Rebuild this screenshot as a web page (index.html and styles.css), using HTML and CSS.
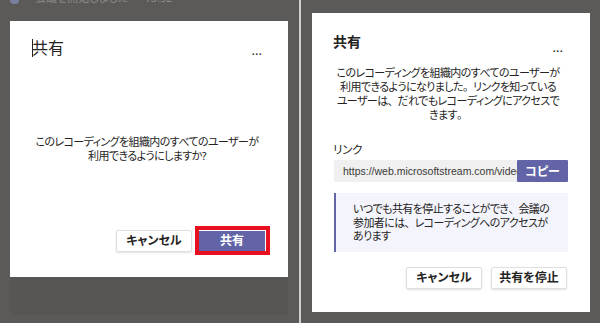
FILE: index.html
```html
<!DOCTYPE html>
<html lang="ja">
<head>
<meta charset="utf-8">
<link rel="stylesheet" href="styles.css">
</head>
<body>
<div class="pane pane-left">
  <div class="topbar">
    <span class="top-icon"></span>
    <span class="top-text">会議を開始しました</span>
    <span class="top-time">13:52</span>
  </div>
  <div class="dialog-wrap">
    <div class="card card-left">
      <div class="head">
        <span class="title title-regular"><span class="caret"></span>共有</span>
        <span class="more">...</span>
      </div>
      <p class="msg msg-left">このレコーディングを組織内のすべてのユーザーが<br>利用できるようにしますか?</p>
      <div class="actions actions-left">
        <button class="btn btn-default">キャンセル</button>
        <span class="highlight"><button class="btn btn-primary">共有</button></span>
      </div>
    </div>
  </div>
</div>
<div class="divider"></div>
<div class="pane pane-right">
  <div class="card card-right">
    <div class="head head-right">
      <span class="title title-bold">共有</span>
      <span class="more">...</span>
    </div>
    <p class="msg msg-right">このレコーディングを組織内のすべてのユーザーが<br>利用できるようになりました<span class="punct">。</span>リンクを知っている<br>ユーザーは<span class="punct">、</span>だれでもレコーディングにアクセスで<br>きます<span class="punct">。</span></p>
    <div class="link-label">リンク</div>
    <div class="link-row">
      <div class="link-input">https://web.microsoftstream.com/video/3f2a9c1e</div>
      <button class="btn-copy">コピー</button>
    </div>
    <div class="info">いつでも共有を停止することができ<span class="punct">、</span>会議の<br>参加者には<span class="punct">、</span>レコーディングへのアクセスが<br>あります</div>
    <div class="actions actions-right">
      <button class="btn btn-default">キャンセル</button>
      <button class="btn btn-default">共有を停止</button>
    </div>
  </div>
</div>
</body>
</html>
```

FILE: styles.css
```css
* { box-sizing: border-box; }
html, body { margin: 0; padding: 0; }
body {
  width: 600px;
  height: 323px;
  overflow: hidden;
  display: flex;
  background: #5b5a58;
  font-family: "Noto Sans", "Noto Sans CJK JP", sans-serif;
  font-feature-settings: "palt";
  color: #252423;
  font-size: 11px;
}
.pane { height: 323px; }
.pane-left { width: 299px; display: flex; flex-direction: column; }
.divider { width: 2px; height: 323px; background: #cfcfcf; }
.pane-right { flex: 1; padding: 13px 0 0 11px; }

.topbar {
  height: 21px;
  overflow: hidden;
  display: flex;
  align-items: flex-start;
  padding-left: 10px;
  color: #8d8b88;
  font-size: 11px;
  line-height: 12px;
}
.top-icon {
  width: 9px; height: 5px;
  margin-top: -1px;
  background: #7b7f9e;
  border-radius: 0 0 4px 4px;
}
.top-text { margin-top: -8px; margin-left: 16px; }
.top-time { margin-top: -8px; margin-left: 16px; }

.dialog-wrap {
  margin-left: 10px;
  width: 278px;
  background: #575654;
  padding-bottom: 38px;
}
.card { background: #fff; display: flex; flex-direction: column; }
.card-left { height: 256px; padding: 17px 26px 0 22px; }
.card-right { width: 278px; height: 299px; padding: 20px 27px 0 21px; }

.head { display: flex; justify-content: space-between; align-items: flex-start; height: 20px; }
.title { position: relative; }
.title-regular { font-size: 16px; line-height: 20px; }
.title-bold { font-size: 14px; line-height: 18px; font-weight: 700; }
.caret {
  position: absolute; left: 0; top: 1px;
  width: 1px; height: 18px; background: #252423;
}
.more { font-size: 13px; line-height: 20px; padding-top: 2px; }
.head-right .more { padding-top: 4px; }

.msg { margin: 0; text-align: center; white-space: nowrap; letter-spacing: -0.6px; }
.msg-left { margin-top: 77px; line-height: 13.5px; margin-left: -6px; margin-right: -6px; }
.msg-right { margin-top: 13px; line-height: 14px; margin-left: -6px; margin-right: -6px; }
.punct { font-feature-settings: normal; letter-spacing: -1px; }

.actions { display: flex; justify-content: flex-end; }
.actions-left { margin-top: auto; margin-bottom: 22px; align-items: center; gap: 3px; margin-right: -8px; }
.actions-right { margin-top: 15px; gap: 9px; margin-right: -4px; }

.btn {
  font-family: inherit;
  font-feature-settings: "palt";
  font-size: 12px;
  font-weight: 700;
  height: 22px;
  width: 76px;
  padding: 0;
  border-radius: 2px;
  line-height: 20px;
}
.btn-default {
  background: #fff;
  color: #252423;
  border: 1px solid #e1dfdd;
  box-shadow: 0 1px 2px rgba(0,0,0,0.12);
}
.highlight {
  display: inline-flex;
  border: 4px solid #e8101e;
  padding: 1px 1px 0 0;
  background: #fff;
}
.btn-primary {
  width: 66px;
  height: 20px;
  background: #6264a7;
  color: #fff;
  border: none;
  border-radius: 0;
  line-height: 20px;
}

.link-label { margin-top: 21px; line-height: 14px; font-size: 11.5px; letter-spacing: -0.3px; }
.link-row { display: flex; margin-top: 3px; width: 235px; margin-left: 1px; }
.link-input {
  width: 183px;
  flex: none;
  height: 22px;
  background: #f0f0f0;
  padding: 0 0 0 9px;
  font-family: "Liberation Sans", "Noto Sans", sans-serif;
  font-size: 10.5px;
  line-height: 22px;
  white-space: nowrap;
  overflow: hidden;
  text-overflow: clip;
  color: #3b3a39;
}
.btn-copy {
  width: 51px;
  flex: none;
  height: 22px;
  border: none;
  background: #6264a7;
  color: #fff;
  font-family: inherit;
  font-feature-settings: "palt";
  font-weight: 700;
  font-size: 12px;
  padding: 0;
  border-radius: 1px;
}
.info {
  margin-top: 11px;
  margin-left: 1px;
  width: 234px;
  background: #f4f4fc;
  border-left: 2px solid #6264a7;
  padding: 9px 0 9px 17px;
  line-height: 13.5px;
  white-space: nowrap;
  letter-spacing: -0.6px;
}
```
